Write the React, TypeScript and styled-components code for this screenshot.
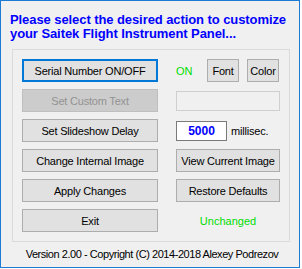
import styled, { createGlobalStyle } from "styled-components";

const GlobalStyle = createGlobalStyle`
  body {
    margin: 0;
    background: #ffffff;
    font-family: "Liberation Sans", Arial, sans-serif;
  }
  * {
    box-sizing: border-box;
  }
`;

const Window = styled.div`
  width: 300px;
  height: 268px;
  border: 1px solid #1c7cd5;
  background: #f0f0f0;
  padding: 12px 9px 0 9px;
`;

const Title = styled.div`
  color: #0000ff;
  font-weight: bold;
  font-size: 13px;
  line-height: 14px;
  letter-spacing: -0.08px;
  white-space: nowrap;
`;

const Panel = styled.div`
  margin: 8px 0 0 2px;
  width: 278px;
  border: 1px solid #dadada;
  padding: 9px;
  display: grid;
  grid-template-columns: 136px 104px;
  grid-auto-rows: 23px;
  column-gap: 18px;
  row-gap: 7px;
`;

const Button = styled.button<{ $focused?: boolean; $width?: number }>`
  width: ${(p) => (p.$width ? `${p.$width}px` : "100%")};
  height: 23px;
  padding: 0;
  margin: 0;
  font-family: "Liberation Sans", Arial, sans-serif;
  font-size: 11px;
  letter-spacing: -0.2px;
  color: #000;
  background: #e1e1e1;
  border: ${(p) => (p.$focused ? "2px solid #0078d7" : "1px solid #adadad")};
  white-space: nowrap;

  &:disabled {
    background: #cccccc;
    border-color: #bfbfbf;
    color: #939393;
  }
`;

const Cell = styled.div<{ $gap?: number; $center?: boolean }>`
  display: flex;
  align-items: center;
  justify-content: ${(p) => (p.$center ? "center" : "flex-start")};
  gap: ${(p) => p.$gap ?? 0}px;
  font-size: 11px;
`;

const ButtonGroup = styled.div`
  display: flex;
  gap: 8px;
`;

const Status = styled.span<{ $width?: number }>`
  color: #00dd00;
  font-size: 11px;
  width: ${(p) => (p.$width ? `${p.$width}px` : "auto")};
`;

const TextBox = styled.div<{ $disabled?: boolean; $width: number }>`
  width: ${(p) => p.$width}px;
  height: 20px;
  background: ${(p) => (p.$disabled ? "#f0f0f0" : "#ffffff")};
  border: 1px solid ${(p) => (p.$disabled ? "#cfcfcf" : "#7a7a7a")};
  display: flex;
  align-items: center;
  justify-content: center;
  color: #0000ff;
  font-weight: bold;
  font-size: 12px;
`;

const Unit = styled.span`
  color: #000;
  font-size: 11px;
  letter-spacing: -0.2px;
`;

const Footer = styled.div`
  margin-top: 6px;
  padding-left: 4px;
  text-align: center;
  font-size: 11px;
  line-height: 13px;
  letter-spacing: -0.45px;
  color: #000;
  white-space: nowrap;
`;

export default function App() {
  return (
    <>
      <GlobalStyle />
      <Window>
        <Title>
          Please select the desired action to customize
          <br />
          your Saitek Flight Instrument Panel...
        </Title>
        <Panel>
          <Button $focused>Serial Number ON/OFF</Button>
          <Cell>
            <Status $width={31}>ON</Status>
            <ButtonGroup>
              <Button $width={32}>Font</Button>
              <Button $width={32}>Color</Button>
            </ButtonGroup>
          </Cell>

          <Button disabled>Set Custom Text</Button>
          <Cell>
            <TextBox $disabled $width={105} />
          </Cell>

          <Button>Set Slideshow Delay</Button>
          <Cell $gap={4}>
            <TextBox $width={51}>5000</TextBox>
            <Unit>millisec.</Unit>
          </Cell>

          <Button>Change Internal Image</Button>
          <Button>View Current Image</Button>

          <Button>Apply Changes</Button>
          <Button>Restore Defaults</Button>

          <Button>Exit</Button>
          <Cell $center>
            <Status>Unchanged</Status>
          </Cell>
        </Panel>
        <Footer>Version 2.00 - Copyright (C) 2014-2018 Alexey Podrezov</Footer>
      </Window>
    </>
  );
}
